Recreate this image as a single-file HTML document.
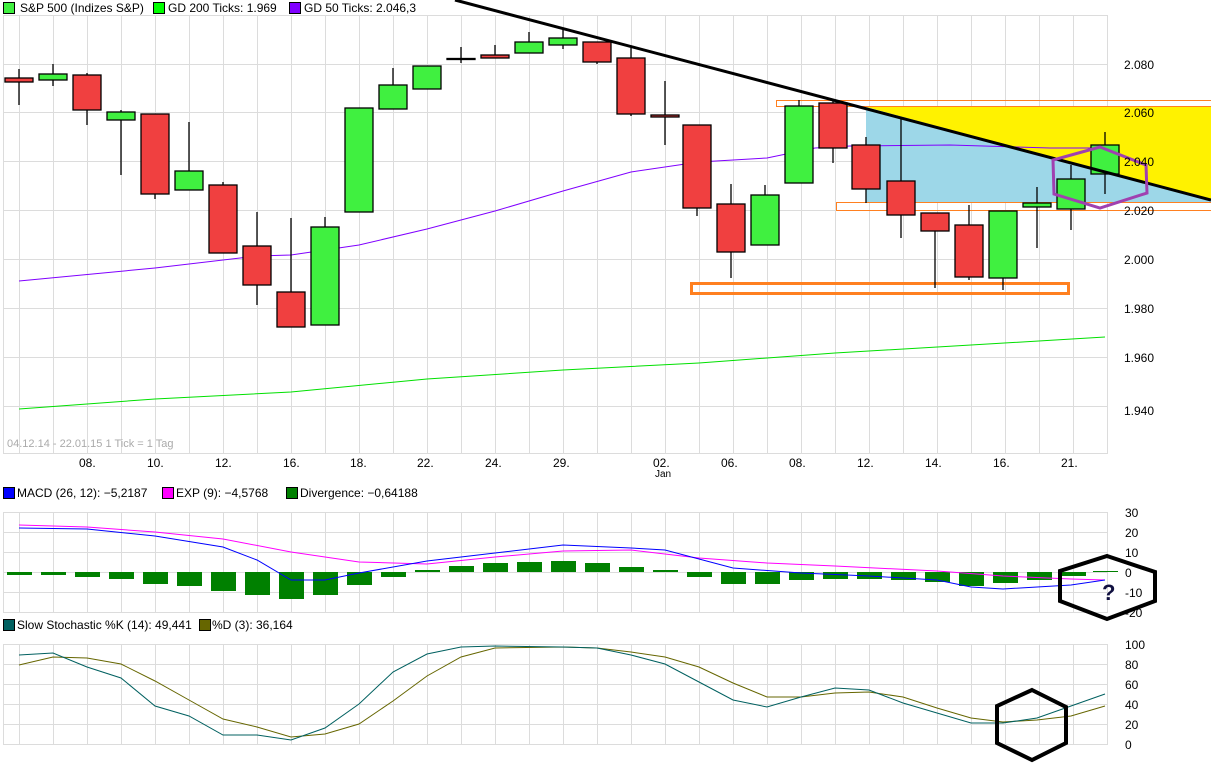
<!DOCTYPE html>
<html><head><meta charset="utf-8"><style>
html,body{margin:0;padding:0;background:#fff;width:1211px;height:765px;overflow:hidden}
svg{display:block;font-family:"Liberation Sans",sans-serif}
</style></head><body>
<svg width="1211" height="765" viewBox="0 0 1211 765" xmlns="http://www.w3.org/2000/svg">
<g stroke="#dcdcdc" stroke-width="1" fill="none" id="grid">
</g>
<script>
</script>
<!-- main grid -->
<g stroke="#dcdcdc" stroke-width="1">
<path d="M3 15.5H1108M3 64.5H1108M3 112.5H1108M3 161.5H1108M3 210.5H1108M3 259.5H1108M3 308.5H1108M3 357.5H1108M3 406.5H1108M3 453.5H1108"/>
<path d="M3.5 15V453M19.5 15V453M53.5 15V453M87.5 15V453M121.5 15V453M155.5 15V453M189.5 15V453M223.5 15V453M257.5 15V453M291.5 15V453M325.5 15V453M359.5 15V453M393.5 15V453M427.5 15V453M461.5 15V453M495.5 15V453M529.5 15V453M563.5 15V453M597.5 15V453M631.5 15V453M665.5 15V453M699.5 15V453M733.5 15V453M767.5 15V453M801.5 15V453M835.5 15V453M869.5 15V453M903.5 15V453M937.5 15V453M971.5 15V453M1005.5 15V453M1039.5 15V453M1073.5 15V453M1107.5 15V453"/>
<path d="M3 512.5H1108M3 532.5H1108M3 552.5H1108M3 572.5H1108M3 592.5H1108M3 612.5H1108"/>
<path d="M3.5 512V612M19.5 512V612M53.5 512V612M87.5 512V612M121.5 512V612M155.5 512V612M189.5 512V612M223.5 512V612M257.5 512V612M291.5 512V612M325.5 512V612M359.5 512V612M393.5 512V612M427.5 512V612M461.5 512V612M495.5 512V612M529.5 512V612M563.5 512V612M597.5 512V612M631.5 512V612M665.5 512V612M699.5 512V612M733.5 512V612M767.5 512V612M801.5 512V612M835.5 512V612M869.5 512V612M903.5 512V612M937.5 512V612M971.5 512V612M1005.5 512V612M1039.5 512V612M1073.5 512V612M1107.5 512V612"/>
<path d="M3 644.5H1108M3 664.5H1108M3 684.5H1108M3 704.5H1108M3 724.5H1108M3 744.5H1108"/>
<path d="M3.5 644V744M19.5 644V744M53.5 644V744M87.5 644V744M121.5 644V744M155.5 644V744M189.5 644V744M223.5 644V744M257.5 644V744M291.5 644V744M325.5 644V744M359.5 644V744M393.5 644V744M427.5 644V744M461.5 644V744M495.5 644V744M529.5 644V744M563.5 644V744M597.5 644V744M631.5 644V744M665.5 644V744M699.5 644V744M733.5 644V744M767.5 644V744M801.5 644V744M835.5 644V744M869.5 644V744M903.5 644V744M937.5 644V744M971.5 644V744M1005.5 644V744M1039.5 644V744M1073.5 644V744M1107.5 644V744"/>
</g>
<!-- legend -->
<g font-size="12" fill="#000">
<rect x="3.5" y="2.5" width="11" height="11" fill="#40f040" stroke="#000"/><text x="20" y="12">S&amp;P 500 (Indizes S&amp;P)</text>
<rect x="153.5" y="2.5" width="11" height="11" fill="#00ff00" stroke="#000"/><text x="168" y="12">GD 200 Ticks: 1.969</text>
<rect x="289.5" y="2.5" width="11" height="11" fill="#8000ff" stroke="#000"/><text x="304" y="12">GD 50 Ticks: 2.046,3</text>
<rect x="3.5" y="487.5" width="11" height="11" fill="#0000ff" stroke="#000"/><text x="17" y="497">MACD (26, 12): −5,2187</text>
<rect x="162.5" y="487.5" width="11" height="11" fill="#ff00ff" stroke="#000"/><text x="176" y="497">EXP (9): −4,5768</text>
<rect x="286.5" y="487.5" width="11" height="11" fill="#008000" stroke="#000"/><text x="300" y="497">Divergence: −0,64188</text>
<rect x="3.5" y="619.5" width="11" height="11" fill="#006060" stroke="#000"/><text x="17" y="629">Slow Stochastic %K (14): 49,441</text>
<rect x="199.5" y="619.5" width="11" height="11" fill="#666600" stroke="#000"/><text x="212" y="629">%D (3): 36,164</text>
</g>
<text x="7" y="447" font-size="11" fill="#aaa">04.12.14 - 22.01.15   1 Tick = 1 Tag</text>
<!-- shaded zones -->
<polygon points="866,107 1211,107 1211,200" fill="#fff200"/>
<polygon points="866,107 1211,200 1211,203 866,203" fill="#9dd7e8"/>
<!-- MAs -->
<polyline fill="none" stroke="#00e000" stroke-width="1" points="19,409 155,399 291,392 427,379 563,370 699,363 835,353 971,345 1105,337"/>
<polyline fill="none" stroke="#8000ff" stroke-width="1" points="19,281 155,268 257,256 291,255 359,245 427,229 495,211 563,191 631,172 699,162 767,158 815,148 850,146 950,145 1050,148 1107,148"/>
<!-- orange boxes -->
<rect x="776.5" y="100.5" width="440" height="6" fill="none" stroke="#ff8020" stroke-width="1"/>
<rect x="836.5" y="202.5" width="380" height="8" fill="none" stroke="#ff8020" stroke-width="1"/>
<rect x="691.5" y="283.5" width="377" height="10" fill="none" stroke="#ff8020" stroke-width="3"/>
<!-- candles -->
<g stroke="#000" stroke-width="1.3">
<path d="M19 69V105M53 64V86M87 73V125M121 110V175M155 114V199M189 122V190M223 182V253M257 212V305M291 218V327M325 217V325M359 108V212M393 68V109M427 66V89M461 47V63M495 45V58M529 32V53M563 30V49M597 42V64M631 48V116M665 81V145M697 125V216M731 184V278M765 185V245M799 100V183M833 100V163M866 137V203M901 118V238M935 213V288M969 205V280M1003 211V290M1037 187V248M1071 165V230M1105 132V194"/>
</g>
<g stroke="#000" stroke-width="1.3">
<rect x="5" y="78" width="28" height="4" fill="#f04040"/>
<rect x="39" y="74" width="28" height="6" fill="#40f040"/>
<rect x="73" y="75" width="28" height="35" fill="#f04040"/>
<rect x="107" y="112" width="28" height="8" fill="#40f040"/>
<rect x="141" y="114" width="28" height="80" fill="#f04040"/>
<rect x="175" y="171" width="28" height="19" fill="#40f040"/>
<rect x="209" y="185" width="28" height="68" fill="#f04040"/>
<rect x="243" y="246" width="28" height="39" fill="#f04040"/>
<rect x="277" y="292" width="28" height="35" fill="#f04040"/>
<rect x="311" y="227" width="28" height="98" fill="#40f040"/>
<rect x="345" y="108" width="28" height="104" fill="#40f040"/>
<rect x="379" y="85" width="28" height="24" fill="#40f040"/>
<rect x="413" y="66" width="28" height="23" fill="#40f040"/>
<rect x="447" y="58.5" width="28" height="1" fill="#000"/>
<rect x="481" y="55" width="28" height="3" fill="#f04040"/>
<rect x="515" y="42" width="28" height="11" fill="#40f040"/>
<rect x="549" y="38" width="28" height="7" fill="#40f040"/>
<rect x="583" y="42" width="28" height="20" fill="#f04040"/>
<rect x="617" y="58" width="28" height="56" fill="#f04040"/>
<rect x="651" y="115" width="28" height="2" fill="#f04040"/>
<rect x="683" y="125" width="28" height="83" fill="#f04040"/>
<rect x="717" y="204" width="28" height="48" fill="#f04040"/>
<rect x="751" y="195" width="28" height="50" fill="#40f040"/>
<rect x="785" y="106" width="28" height="77" fill="#40f040"/>
<rect x="819" y="103" width="28" height="45" fill="#f04040"/>
<rect x="852" y="145" width="28" height="44" fill="#f04040"/>
<rect x="887" y="181" width="28" height="34" fill="#f04040"/>
<rect x="921" y="213" width="28" height="18" fill="#f04040"/>
<rect x="955" y="225" width="28" height="52" fill="#f04040"/>
<rect x="989" y="211" width="28" height="67" fill="#40f040"/>
<rect x="1023" y="203" width="28" height="4" fill="#40f040"/>
<rect x="1057" y="179" width="28" height="30" fill="#40f040"/>
<rect x="1091" y="145" width="28" height="29" fill="#40f040"/>
</g>
<!-- trend line -->
<line x1="455" y1="0" x2="1211" y2="200" stroke="#000" stroke-width="3"/>
<!-- purple hexagon -->
<polygon points="1100,147 1146,165 1147,193 1100,208 1054,194 1053,160" fill="none" stroke="#a040b0" stroke-width="3"/>
<!-- price labels -->
<g font-size="12" fill="#000">
<text x="1124" y="69">2.080</text><text x="1124" y="117">2.060</text><text x="1124" y="166">2.040</text><text x="1124" y="215">2.020</text><text x="1124" y="264">2.000</text><text x="1124" y="313">1.980</text><text x="1124" y="362">1.960</text><text x="1124" y="415">1.940</text>
<text x="79" y="467">08.</text><text x="147" y="467">10.</text><text x="215" y="467">12.</text><text x="283" y="467">16.</text><text x="350" y="467">18.</text><text x="417" y="467">22.</text><text x="485" y="467">24.</text><text x="553" y="467">29.</text><text x="653" y="467">02.</text><text x="655" y="477" font-size="10">Jan</text><text x="721" y="467">06.</text><text x="789" y="467">08.</text><text x="857" y="467">12.</text><text x="925" y="467">14.</text><text x="993" y="467">16.</text><text x="1061" y="467">21.</text>
<text x="1125" y="517">30</text><text x="1125" y="537">20</text><text x="1125" y="557">10</text><text x="1125" y="577">0</text><text x="1125" y="597">-10</text><text x="1125" y="617">-20</text>
<text x="1125" y="649">100</text><text x="1125" y="689">60</text><text x="1125" y="669">80</text><text x="1125" y="709">40</text><text x="1125" y="729">20</text><text x="1125" y="749">0</text>
</g>
<!-- MACD histogram -->
<g fill="#008000">
<rect x="7" y="572" width="25" height="3"/><rect x="41" y="572" width="25" height="3"/><rect x="75" y="572" width="25" height="5"/><rect x="109" y="572" width="25" height="7"/><rect x="143" y="572" width="25" height="12"/><rect x="177" y="572" width="25" height="14"/><rect x="211" y="572" width="25" height="19"/><rect x="245" y="572" width="25" height="23"/><rect x="279" y="572" width="25" height="27"/><rect x="313" y="572" width="25" height="23"/><rect x="347" y="572" width="25" height="13"/><rect x="381" y="572" width="25" height="5"/><rect x="415" y="570" width="25" height="2"/><rect x="449" y="566" width="25" height="6"/><rect x="483" y="563" width="25" height="9"/><rect x="517" y="562" width="25" height="10"/><rect x="551" y="561" width="25" height="11"/><rect x="585" y="563" width="25" height="9"/><rect x="619" y="567" width="25" height="5"/><rect x="653" y="570" width="25" height="2"/><rect x="687" y="572" width="25" height="5"/><rect x="721" y="572" width="25" height="12"/><rect x="755" y="572" width="25" height="12"/><rect x="789" y="572" width="25" height="8"/><rect x="823" y="572" width="25" height="7"/><rect x="857" y="572" width="25" height="7"/><rect x="891" y="572" width="25" height="8"/><rect x="925" y="572" width="25" height="10"/><rect x="959" y="572" width="25" height="14"/><rect x="993" y="572" width="25" height="11"/><rect x="1027" y="572" width="25" height="8"/><rect x="1061" y="572" width="25" height="4"/><rect x="1093" y="571" width="25" height="1"/>
</g>
<polyline fill="none" stroke="#ff00ff" stroke-width="1" points="19,525 87,527 155,532 223,539 291,552 359,562 427,564 495,557 563,551 631,550 699,558 767,563 835,566 937,571 1003,576 1071,579 1105,580"/>
<polyline fill="none" stroke="#0000ff" stroke-width="1" points="19,528 87,529 155,536 223,547 257,560 291,580 325,580 359,573 427,561 495,553 563,545 631,548 665,550 733,568 801,573 869,576 937,580 971,587 1003,589 1071,585 1105,580"/>
<polygon points="1107,556 1155,572 1155,601 1107,619 1060,601 1060,571" fill="none" stroke="#000" stroke-width="4"/>
<text x="1102" y="600" font-size="22" font-weight="bold" fill="#101040">?</text>
<!-- stochastic -->
<polyline fill="none" stroke="#666600" stroke-width="1" points="19,665 53,657 87,658 121,664 155,681 189,700 223,719 257,727 291,737 325,734 359,724 393,701 427,676 461,657 495,648 563,647 597,648 631,652 665,657 699,667 733,683 767,697 801,697 835,693 869,692 903,697 937,708 971,718 1003,722 1037,720 1071,716 1105,706"/>
<polyline fill="none" stroke="#006060" stroke-width="1" points="19,655 53,653 87,667 121,678 155,706 189,716 223,735 257,735 291,740 325,728 359,704 393,672 427,654 461,647 495,646 563,647 597,648 631,655 665,664 699,682 733,700 767,707 801,697 835,688 869,690 903,703 937,713 971,723 1003,723 1037,718 1071,706 1105,694"/>
<polygon points="1032,690 1066,707 1066,743 1032,760 997,743 997,706" fill="none" stroke="#000" stroke-width="4"/>
</svg>
</body></html>
